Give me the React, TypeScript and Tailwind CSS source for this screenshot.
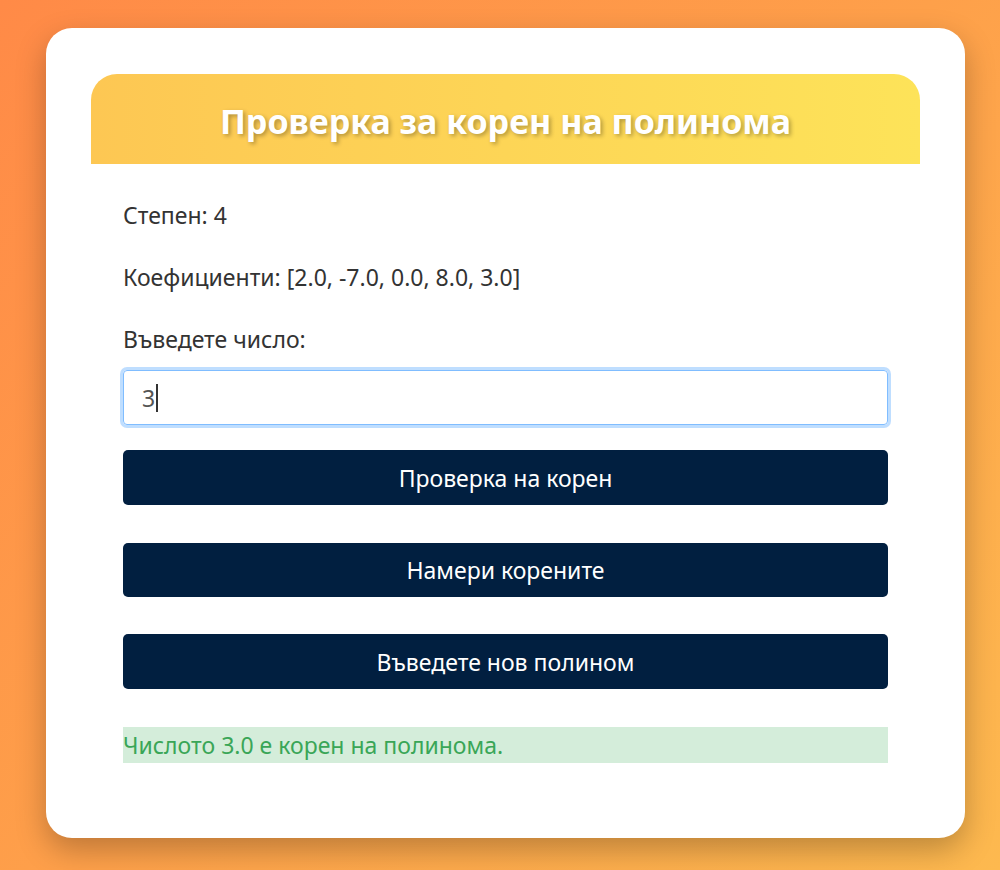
import React from "react";

export default function App() {
  return (
    <div
      className="w-[1000px] h-[870px] bg-[linear-gradient(135deg,#ff8a47_0%,#fea04a_50%,#fdb94f_100%)] pt-[28px] pl-[46px]"
      style={{ fontFamily: '"Noto Sans", "Open Sans", sans-serif' }}
    >
      <div className="w-[919px] h-[810px] bg-white rounded-[26px] shadow-[0_12px_30px_rgba(0,0,0,0.25)] pt-[46px] px-[45px]">
        <div className="h-[90px] rounded-t-[26px] bg-[linear-gradient(90deg,#fdc753,#fde359)] flex items-center justify-center pt-[4px]">
          <h1 className="text-white font-bold text-[34px] [text-shadow:2px_2px_4px_rgba(0,0,0,0.3)] leading-none">
            Проверка за корен на полинома
          </h1>
        </div>
        <div className="px-[32px] pt-[36px] text-[#333] text-[23px] leading-[30px]">
          <p>Степен: 4</p>
          <p className="mt-[32px]">Коефициенти: [2.0, -7.0, 0.0, 8.0, 3.0]</p>
          <p className="mt-[32px]">Въведете число:</p>
          <div className="mt-[16px] h-[55px] border border-[#80bdff] rounded-[4px] shadow-[0_0_0_3px_rgba(0,123,255,0.25)] flex items-center pl-[18px] text-[#555] text-[23px]">
            <span>3</span>
            <span className="inline-block w-[2px] h-[28px] bg-[#333] ml-[1px]" />
          </div>
          <button className="mt-[25px] w-full h-[55px] bg-[#011f40] text-white rounded-[5px] text-[23px]">
            Проверка на корен
          </button>
          <button className="mt-[38px] w-full h-[54px] bg-[#011f40] text-white rounded-[5px] text-[23px]">
            Намери корените
          </button>
          <button className="mt-[37px] w-full h-[55px] bg-[#011f40] text-white rounded-[5px] text-[23px]">
            Въведете нов полином
          </button>
          <div className="mt-[38px] h-[36px] bg-[#d4edda] text-[#3aa657] flex items-center">
            Числото 3.0 е корен на полинома.
          </div>
        </div>
      </div>
    </div>
  );
}
